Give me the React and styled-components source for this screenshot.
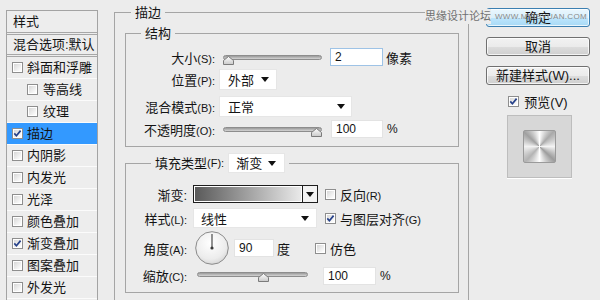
import React from "react";
import styled, { createGlobalStyle } from "styled-components";

const GlobalStyle = createGlobalStyle`
  html, body { margin: 0; padding: 0; background: #ececec; }
  body {
    font-family: "Liberation Sans", "Noto Sans CJK SC", sans-serif;
    font-size: 13px;
    color: #141414;
  }
  * { box-sizing: border-box; }
`;

const Screen = styled.div`
  position: relative;
  width: 600px;
  height: 300px;
  overflow: hidden;
  display: flex;
  align-items: flex-start;
  background: #ececec;
`;

/* ---------- left list ---------- */
const Sidebar = styled.div`
  flex: none;
  width: 92px;
  height: 320px;
  margin: 10px 0 0 6px;
  border: 1px solid #a3a3a3;
  border-bottom: none;
  background: #ededed;
`;

const SideHead = styled.div`
  height: ${(p) => p.$h}px;
  padding-left: 6px;
  line-height: ${(p) => p.$h - 3}px;
  border-bottom: 3px double #a7a7a7;
  white-space: nowrap;
`;

const SideItem = styled.div`
  display: flex;
  align-items: center;
  gap: ${(p) => (p.$indent ? 5 : 4)}px;
  height: 22px;
  padding-left: ${(p) => (p.$indent ? 20 : 5)}px;
  border-bottom: 1px solid #fbfbfb;
  background: ${(p) => (p.$active ? "#3399ff" : "transparent")};
  white-space: nowrap;
  line-height: 20px;
`;

/* ---------- main group ---------- */
const Main = styled.div`
  flex: none;
  width: 355px;
  margin: 4px 0 0 16px;
`;

const Group = styled.fieldset`
  margin: 0;
  padding: 0 9px 30px 10px;
  border: 1px solid #a5a5a5;
  min-width: 0;
`;

const Section = styled.fieldset`
  margin: ${(p) => p.$mt}px 0 0;
  padding: ${(p) => p.$pt}px 0 7px 0;
  border: 1px solid #a5a5a5;
  min-width: 0;
`;

const Legend = styled.legend`
  display: flex;
  align-items: center;
  padding: 0 4px;
  margin-left: ${(p) => p.$ml}px;
  line-height: 17px;
  white-space: nowrap;
`;

const Row = styled.div`
  display: flex;
  align-items: center;
  height: ${(p) => p.$h || 20}px;
  margin-top: ${(p) => p.$mt || 0}px;
  white-space: nowrap;
`;

const Label = styled.div`
  flex: none;
  width: ${(p) => p.$w}px;
  text-align: right;
`;

const Key = styled.span`
  font-size: 11px;
`;

const Unit = styled.span`
  margin-left: ${(p) => p.$ml || 0}px;
  font-size: ${(p) => (p.$small ? 12 : 13)}px;
`;

const SliderBox = styled.div`
  position: relative;
  flex: none;
  width: ${(p) => p.$w}px;
  height: 20px;
  margin-left: ${(p) => p.$ml}px;
`;

const Track = styled.div`
  margin-top: ${(p) => p.$top}px;
  height: 5px;
  border-radius: 3px;
  border: 1px solid #8d8d8d;
  background: linear-gradient(#9a9a9a, #d4d4d4);
`;

const Thumb = styled.svg`
  position: absolute;
  top: ${(p) => p.$top}px;
`;

const Field = styled.div`
  flex: none;
  width: ${(p) => p.$w}px;
  height: ${(p) => p.$h || 18}px;
  margin-left: ${(p) => p.$ml}px;
  padding-left: 4px;
  background: #fff;
  border: 1px solid ${(p) => (p.$focus ? "#9ec3e6" : "#e3e3e3")};
  font-size: 12px;
  line-height: ${(p) => (p.$h || 18) - 2}px;
`;

const SelectBox = styled.div`
  flex: none;
  display: flex;
  align-items: center;
  justify-content: space-between;
  width: ${(p) => p.$w}px;
  height: ${(p) => p.$h || 21}px;
  margin-left: ${(p) => p.$ml}px;
  padding: 0 ${(p) => p.$pr}px 0 ${(p) => p.$pl}px;
  background: #fff;
  border: 1px solid #e6e6e6;
`;

const GradientBar = styled.div`
  flex: none;
  display: flex;
  width: 125px;
  height: 18px;
  margin-left: 6px;
  border: 1px solid #1e1e1e;
`;

const GradientFill = styled.div`
  flex: 1;
  border: 1px solid #fff;
  background: linear-gradient(90deg, #5a5a5a, #9a9a9a 45%, #e9e9e9);
`;

const GradientDrop = styled.div`
  flex: none;
  display: flex;
  align-items: center;
  justify-content: center;
  width: 15px;
  border-left: 1px solid #1e1e1e;
  background: #f3f3f3;
`;

const Check = styled.label`
  display: flex;
  align-items: center;
  gap: ${(p) => p.$gap || 4}px;
  margin-left: ${(p) => p.$ml || 0}px;
`;

const DialSvg = styled.svg`
  flex: none;
  margin-left: ${(p) => p.$ml}px;
`;

/* ---------- right column ---------- */
const Side = styled.div`
  flex: none;
  width: 104px;
  margin: 8px 0 0 17px;
  display: flex;
  flex-direction: column;
  align-items: center;
`;

const Button = styled.div`
  width: 100%;
  height: 19px;
  margin-top: ${(p) => p.$mt || 0}px;
  display: flex;
  align-items: center;
  justify-content: center;
  border: 1px solid ${(p) => (p.$primary ? "#3c7fb1" : "#707070")};
  border-radius: 3px;
  background: ${(p) =>
    p.$primary
      ? "linear-gradient(#eaf6fd, #d9f0fc 50%, #bee6fd 51%, #a7d9f5)"
      : "linear-gradient(#f2f2f2, #ebebeb 50%, #dddddd 51%, #cfcfcf)"};
  box-shadow: inset 0 0 0 1px rgba(255, 255, 255, 0.75);
  line-height: 17px;
  white-space: nowrap;
`;

const PreviewCheck = styled(Check)`
  margin-top: 8px;
  height: 16px;
`;

const PreviewBox = styled.div`
  display: flex;
  align-items: center;
  justify-content: center;
  width: 65px;
  height: 63px;
  margin-top: 6px;
  margin-left: 3px;
  border: 1px solid #bdbdbd;
  background: #d7d7d7;
  box-shadow: 0 1px 0 #fff;
`;

const Swatch = styled.div`
  width: 33px;
  height: 33px;
  border: 1px solid #9a9a9a;
  border-radius: 2px;
  background: conic-gradient(
    #ffffff,
    #a9a9a9 12%,
    #f4f4f4 25%,
    #9c9c9c 37%,
    #ffffff 50%,
    #b3b3b3 62%,
    #f2f2f2 75%,
    #a0a0a0 87%,
    #ffffff
  );
`;

const Watermark = styled.div`
  position: absolute;
  top: 9px;
  left: 425px;
  display: flex;
  align-items: center;
  gap: 4px;
  white-space: nowrap;
  color: #707070;
  font-size: 11px;
  line-height: 15px;
`;

const WatermarkName = styled.span`
  background: #ececec;
`;

const WatermarkUrl = styled.span`
  font-size: 8px;
  letter-spacing: 0.3px;
  color: #8a8a8a;
`;

/* ---------- drawings ---------- */
const Box = ({ checked }) => (
  <svg width="11" height="11" viewBox="0 0 11 11">
    <defs>
      <linearGradient id="cb" x1="0" y1="0" x2="1" y2="1">
        <stop offset="0" stopColor="#d8d8d8" />
        <stop offset="1" stopColor="#ffffff" />
      </linearGradient>
    </defs>
    <rect x="0.5" y="0.5" width="10" height="10" fill="#fff" stroke="#8e8e8e" />
    <rect x="2" y="2" width="7" height="7" fill="url(#cb)" />
    {checked && (
      <path d="M2.3 5.4 L4.4 7.8 L8.6 2.6" fill="none" stroke="#26418a" strokeWidth="1.7" />
    )}
  </svg>
);

const Arrow = () => (
  <svg width="8" height="5" viewBox="0 0 8 5">
    <path d="M0 0 H8 L4 5 Z" fill="#111" />
  </svg>
);

const Slider = ({ w, ml, value, top = 7 }) => (
  <SliderBox $w={w} $ml={ml}>
    <Track $top={top} />
    <Thumb
      $top={top + 1}
      width="11"
      height="9"
      viewBox="0 0 11 9"
      style={{ left: Math.round(value * (w - 11)) }}
    >
      <defs>
        <linearGradient id="th" x1="0" y1="0" x2="0" y2="1">
          <stop offset="0" stopColor="#ffffff" />
          <stop offset="1" stopColor="#c9c9c9" />
        </linearGradient>
      </defs>
      <path d="M5.5 0.5 L10.5 4.5 V8.5 H0.5 V4.5 Z" fill="url(#th)" stroke="#7b7b7b" />
    </Thumb>
  </SliderBox>
);

const Dial = () => (
  <DialSvg $ml={8} width="34" height="34" viewBox="0 0 34 34">
    <defs>
      <radialGradient id="dl" cx="0.45" cy="0.35" r="0.7">
        <stop offset="0" stopColor="#ffffff" />
        <stop offset="0.7" stopColor="#ececec" />
        <stop offset="1" stopColor="#d2d2d2" />
      </radialGradient>
    </defs>
    <circle cx="17" cy="17" r="16.3" fill="url(#dl)" stroke="#8a8a8a" />
    <line x1="17" y1="17" x2="17" y2="3" stroke="#4a4a4a" strokeWidth="1.2" />
    <circle cx="17" cy="17" r="1.6" fill="#3a3a3a" />
  </DialSvg>
);

const layers = [
  { name: "斜面和浮雕" },
  { name: "等高线", indent: true },
  { name: "纹理", indent: true },
  { name: "描边", checked: true, active: true },
  { name: "内阴影" },
  { name: "内发光" },
  { name: "光泽" },
  { name: "颜色叠加" },
  { name: "渐变叠加", checked: true },
  { name: "图案叠加" },
  { name: "外发光" },
];

export default function App() {
  return (
    <>
      <GlobalStyle />
      <Screen>
        <Sidebar>
          <SideHead $h={24}>样式</SideHead>
          <SideHead $h={22}>混合选项:默认</SideHead>
          {layers.map((l) => (
            <SideItem key={l.name} $indent={l.indent} $active={l.active}>
              <Box checked={l.checked} />
              {l.name}
            </SideItem>
          ))}
        </Sidebar>

        <Main>
          <Group>
            <Legend $ml={6}>描边</Legend>

            <Section $mt={4} $pt={5}>
              <Legend $ml={15}>结构</Legend>
              <Row>
                <Label $w={89}>
                  大小<Key>(S):</Key>
                </Label>
                <Slider w={99} ml={8} value={0} top={8} />
                <Field $w={53} $ml={8} $focus>
                  2
                </Field>
                <Unit $ml={3}>像素</Unit>
              </Row>
              <Row $h={21} $mt={2}>
                <Label $w={89}>
                  位置<Key>(P):</Key>
                </Label>
                <SelectBox $w={58} $ml={4} $pl={8} $pr={7}>
                  外部
                  <Arrow />
                </SelectBox>
              </Row>
              <Row $h={21} $mt={6}>
                <Label $w={89}>
                  混合模式<Key>(B):</Key>
                </Label>
                <SelectBox $w={133} $ml={4} $pl={8} $pr={6}>
                  正常
                  <Arrow />
                </SelectBox>
              </Row>
              <Row $mt={2}>
                <Label $w={89}>
                  不透明度<Key>(O):</Key>
                </Label>
                <Slider w={99} ml={8} value={1} top={8} />
                <Field $w={52} $ml={9}>
                  100
                </Field>
                <Unit $ml={4} $small>
                  %
                </Unit>
              </Row>
            </Section>

            <Section $mt={6} $pt={11}>
              <Legend $ml={25}>
                填充类型<Key>(F):</Key>
                <SelectBox $w={57} $h={20} $ml={4} $pl={7} $pr={8}>
                  渐变
                  <Arrow />
                </SelectBox>
              </Legend>
              <Row>
                <Label $w={61}>渐变:</Label>
                <GradientBar>
                  <GradientFill />
                  <GradientDrop>
                    <Arrow />
                  </GradientDrop>
                </GradientBar>
                <Check $ml={7}>
                  <Box />
                  <span>
                    反向<Key>(R)</Key>
                  </span>
                </Check>
              </Row>
              <Row $mt={4}>
                <Label $w={61}>
                  样式<Key>(L):</Key>
                </Label>
                <SelectBox $w={124} $h={20} $ml={6} $pl={7} $pr={7}>
                  线性
                  <Arrow />
                </SelectBox>
                <Check $ml={8}>
                  <Box checked />
                  <span>
                    与图层对齐<Key>(G)</Key>
                  </span>
                </Check>
              </Row>
              <Row $h={34} $mt={3}>
                <Label $w={61}>
                  角度<Key>(A):</Key>
                </Label>
                <Dial />
                <Field $w={40} $ml={5}>
                  90
                </Field>
                <Unit $ml={3}>度</Unit>
                <Check $ml={25}>
                  <Box />
                  仿色
                </Check>
              </Row>
              <Row $h={19} $mt={1}>
                <Label $w={61}>
                  缩放<Key>(C):</Key>
                </Label>
                <Slider w={111} ml={10} value={0.61} top={6} />
                <Field $w={53} $ml={15}>
                  100
                </Field>
                <Unit $ml={4} $small>
                  %
                </Unit>
              </Row>
            </Section>
          </Group>
        </Main>

        <Side>
          <Button $primary>确定</Button>
          <Button $mt={10}>取消</Button>
          <Button $mt={10}>新建样式(W)...</Button>
          <PreviewCheck $gap={5}>
            <Box checked />
            预览(V)
          </PreviewCheck>
          <PreviewBox>
            <Swatch />
          </PreviewBox>
        </Side>

        <Watermark>
          <WatermarkName>思缘设计论坛</WatermarkName>
          <WatermarkUrl>WWW.MISSYUAN.COM</WatermarkUrl>
        </Watermark>
      </Screen>
    </>
  );
}
